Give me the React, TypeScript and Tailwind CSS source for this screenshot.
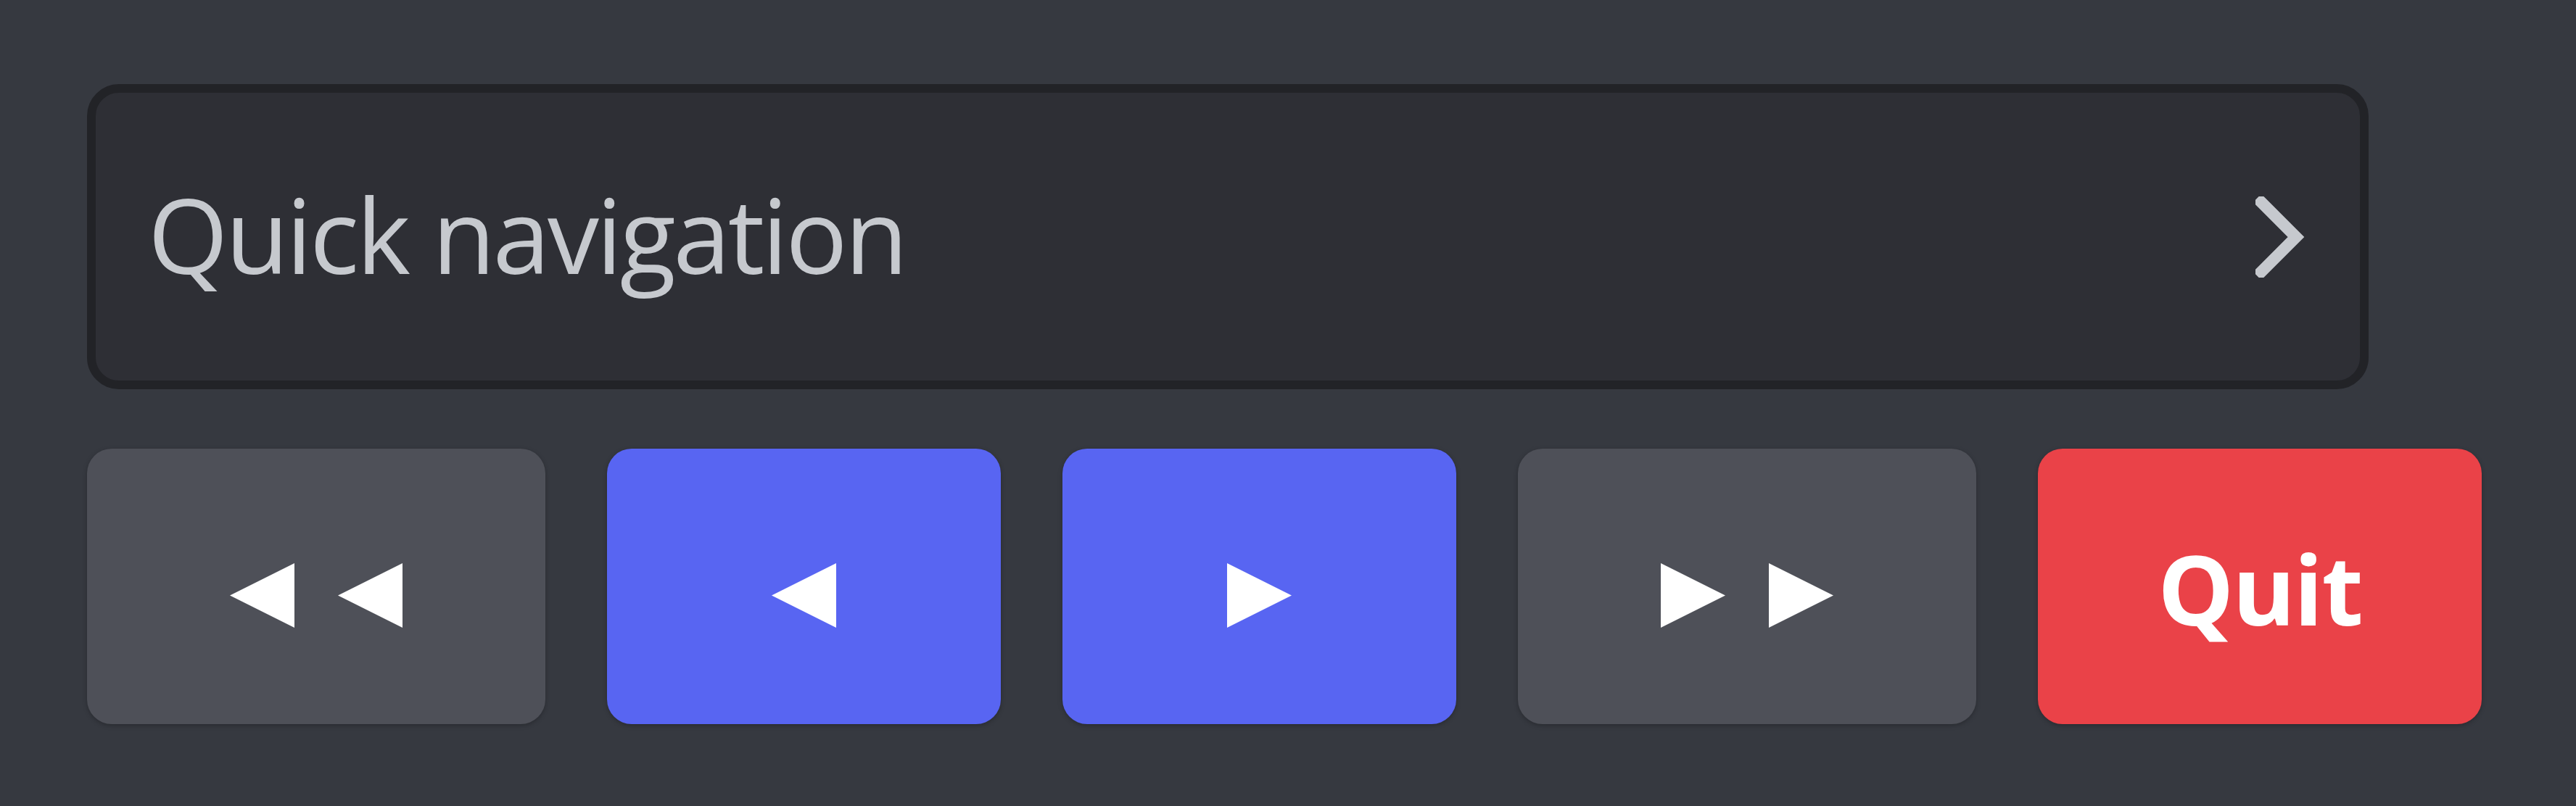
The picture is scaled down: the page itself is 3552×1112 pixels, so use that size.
import type { ReactNode } from 'react'

function TriLeft() {
  return (
    <svg width="89" height="89" viewBox="0 0 89 89" className="block">
      <polygon points="89,0 89,89 0,44.5" fill="#ffffff" />
    </svg>
  )
}

function TriRight() {
  return (
    <svg width="89" height="89" viewBox="0 0 89 89" className="block">
      <polygon points="0,0 0,89 89,44.5" fill="#ffffff" />
    </svg>
  )
}

function NavButton({ className, children }: { className: string; children: ReactNode }) {
  return (
    <button
      className={`h-[380px] rounded-[34px] flex items-center justify-center shadow-[0_2px_6px_rgba(0,0,0,0.25)] ${className}`}
    >
      {children}
    </button>
  )
}

export default function App() {
  return (
    <div className="min-h-screen bg-[#363940] pt-[116px] pl-[120px] font-['Open_Sans',sans-serif]">
      {/* Quick navigation select */}
      <div className="w-[3146px] h-[421px] rounded-[44px] border-[12px] border-[#222327] bg-[#2e2f35] flex items-center justify-between pl-[72px] pr-[76px]">
        <span className="text-[142px] leading-none text-[#c6c9ce] tracking-[-3.5px] pb-[8px]">
          Quick navigation
        </span>
        <svg width="68" height="112" viewBox="0 0 68 112" className="block">
          <polyline
            points="8,8 56,56 8,104"
            fill="none"
            stroke="#c6c9ce"
            strokeWidth="16"
            strokeLinecap="square"
          />
        </svg>
      </div>

      {/* Buttons */}
      <div className="mt-[82px] flex gap-[85px]">
        <NavButton className="w-[632px] bg-[#4e5058] gap-[60px] pt-[24px]">
          <TriLeft />
          <TriLeft />
        </NavButton>
        <NavButton className="w-[543px] bg-[#5865f2] pt-[24px]">
          <TriLeft />
        </NavButton>
        <NavButton className="w-[543px] bg-[#5865f2] pt-[24px]">
          <TriRight />
        </NavButton>
        <NavButton className="w-[632px] bg-[#4e5058] gap-[60px] pt-[24px]">
          <TriRight />
          <TriRight />
        </NavButton>
        <NavButton className="w-[612px] bg-[#ea4248]">
          <span className="text-[132px] leading-none font-bold text-white tracking-[-2px] pt-[6px]">Quit</span>
        </NavButton>
      </div>
    </div>
  )
}
